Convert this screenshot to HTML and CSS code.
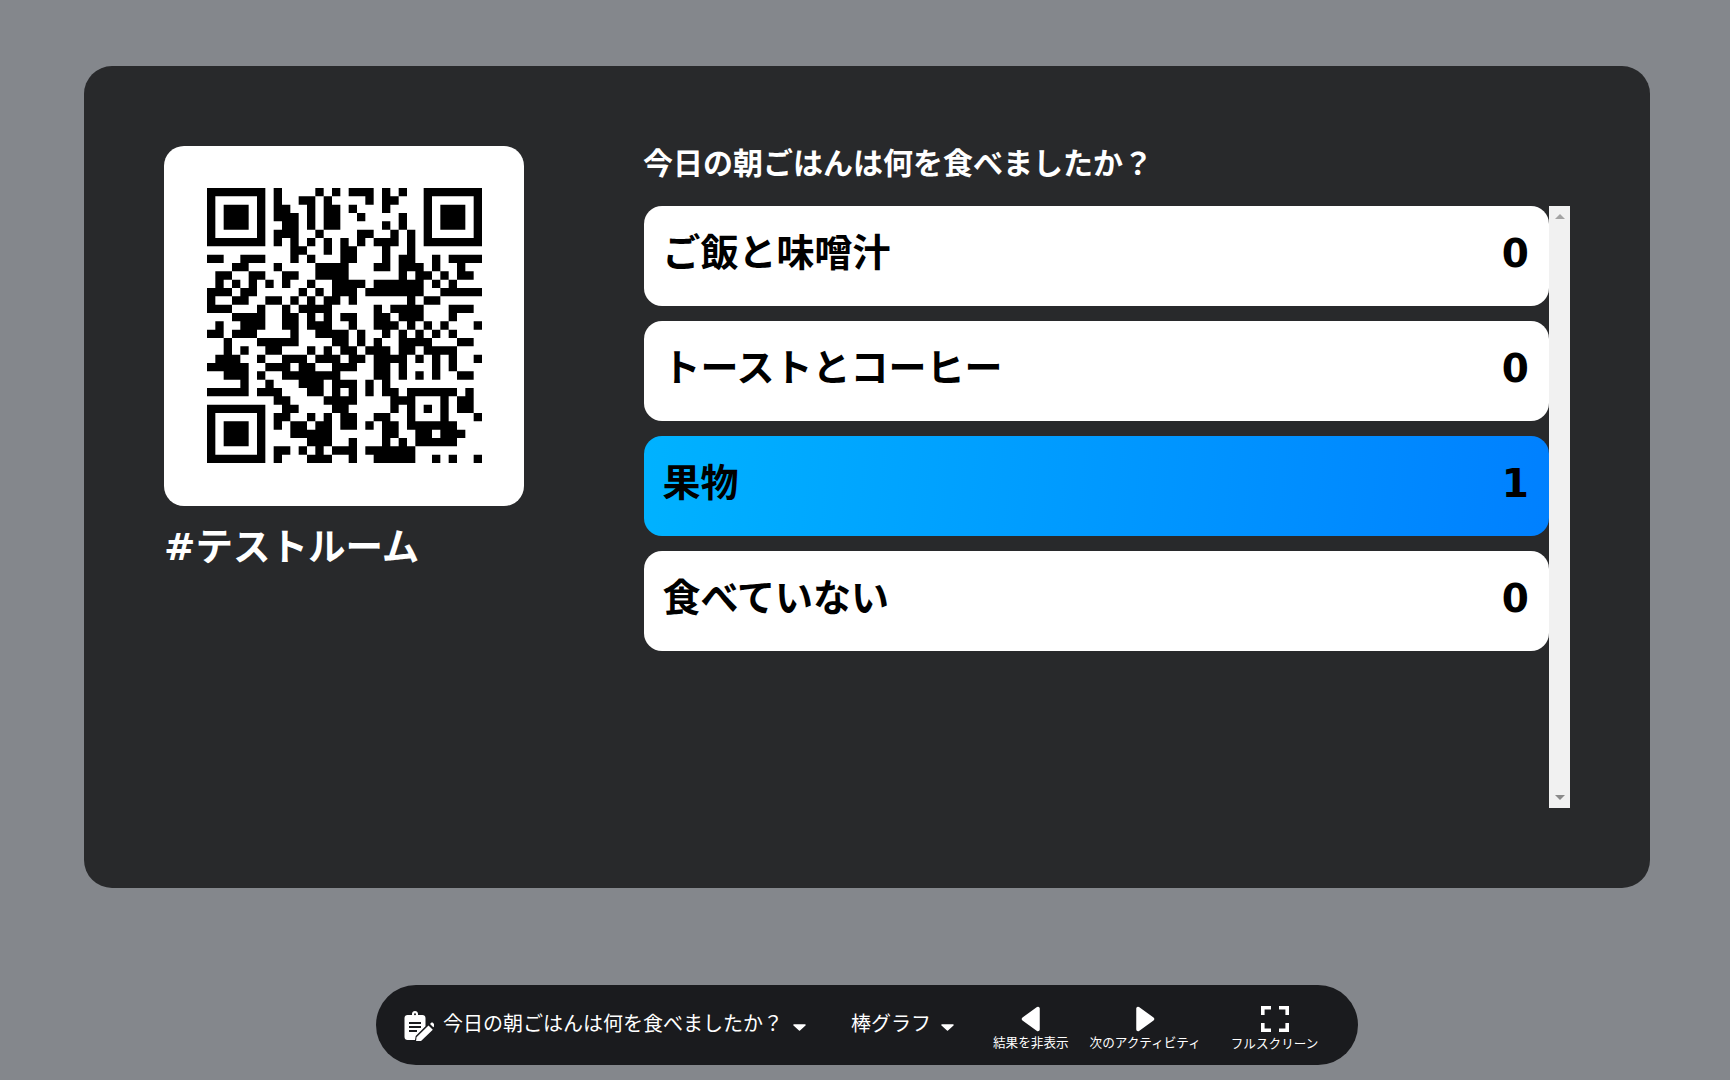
FILE: index.html
```html
<!DOCTYPE html>
<html lang="ja">
<head>
<meta charset="utf-8">
<title>テストルーム</title>
<link rel="stylesheet" href="styles.css">
</head>
<body>
<div class="page">
  <main class="panel">
    <section class="room">
      <div class="qr-card">
        <svg class="qr" viewBox="0 0 33 33" aria-label="QRコード">
          <path fill="none" stroke="#000" stroke-width="1" d="
M0 .5h7M8 .5h1M13 .5h1M15 .5h1M17 .5h3M21 .5h1M23 .5h1M26 .5h7
M0 1.5h1M6 1.5h1M8 1.5h1M11 1.5h2M14 1.5h1M19 1.5h1M21 1.5h2M26 1.5h1M32 1.5h1
M0 2.5h1M2 2.5h3M6 2.5h1M8 2.5h2M12 2.5h1M14 2.5h2M17 2.5h1M21 2.5h1M26 2.5h1M28 2.5h3M32 2.5h1
M0 3.5h1M2 3.5h3M6 3.5h1M8 3.5h3M12 3.5h1M14 3.5h2M18 3.5h1M23 3.5h1M26 3.5h1M28 3.5h3M32 3.5h1
M0 4.5h1M2 4.5h3M6 4.5h1M9 4.5h2M12 4.5h1M14 4.5h2M21 4.5h1M23 4.5h1M26 4.5h1M28 4.5h3M32 4.5h1
M0 5.5h1M6 5.5h1M8 5.5h3M13 5.5h1M18 5.5h2M22 5.5h1M24 5.5h1M26 5.5h1M32 5.5h1
M0 6.5h7M8 6.5h1M10 6.5h1M12 6.5h1M14 6.5h1M16 6.5h1M18 6.5h1M20 6.5h2M22 6.5h1M24 6.5h1M26 6.5h7
M10 7.5h2M14 7.5h1M16 7.5h2M21 7.5h1M24 7.5h1
M0 8.5h2M4 8.5h3M10 8.5h1M12 8.5h1M16 8.5h2M21 8.5h1M23 8.5h2M27 8.5h1M29 8.5h4
M3 9.5h2M8 9.5h1M13 9.5h4M20 9.5h2M23 9.5h3M27 9.5h1M30 9.5h1
M1 10.5h2M5 10.5h2M9 10.5h2M13 10.5h4M23 10.5h1M25 10.5h2M28 10.5h1M30 10.5h2
M1 11.5h1M3 11.5h1M5 11.5h1M7 11.5h1M9 11.5h1M12 11.5h1M15 11.5h4M20 11.5h6M27 11.5h1M29 11.5h1
M0 12.5h3M4 12.5h2M11 12.5h1M13 12.5h1M15 12.5h3M19 12.5h7M28 12.5h3M31 12.5h2
M0 13.5h1M3 13.5h2M7 13.5h2M10 13.5h1M12 13.5h1M14 13.5h2M17 13.5h1M24 13.5h1M26 13.5h2
M0 14.5h3M6 14.5h1M9 14.5h1M11 14.5h4M20 14.5h1M22 14.5h4M29 14.5h3
M3 15.5h4M9 15.5h2M12 15.5h1M14 15.5h1M16 15.5h2M20 15.5h2M23 15.5h3M29 15.5h1
M1 16.5h1M4 16.5h3M9 16.5h2M12 16.5h3M17 16.5h1M20 16.5h3M24 16.5h1M26 16.5h1M28 16.5h1M32 16.5h1
M0 17.5h2M3 17.5h3M10 17.5h1M13 17.5h4M18 17.5h1M21 17.5h1M23 17.5h1M25 17.5h1M27 17.5h1M29 17.5h1
M2 18.5h1M6 18.5h5M15 18.5h2M18 18.5h1M20 18.5h1M23 18.5h4M30 18.5h2
M2 19.5h1M4 19.5h1M7 19.5h2M12 19.5h1M14 19.5h1M16 19.5h2M19 19.5h3M23 19.5h2M26 19.5h4
M1 20.5h3M6 20.5h1M9 20.5h3M13 20.5h3M17 20.5h2M20 20.5h4M25 20.5h1M27 20.5h1M29 20.5h1M32 20.5h1
M0 21.5h5M7 21.5h3M11 21.5h2M15 21.5h3M20 21.5h2M23 21.5h1M27 21.5h1M29 21.5h1
M2 22.5h3M6 22.5h1M9 22.5h7M20 22.5h2M23 22.5h1M25 22.5h1M27 22.5h1M30 22.5h2
M4 23.5h1M7 23.5h1M11 23.5h3M15 23.5h3M19 23.5h1M21 23.5h1
M0 24.5h5M6 24.5h3M12 24.5h2M15 24.5h1M17 24.5h1M19 24.5h1M21 24.5h2M24 24.5h6M31 24.5h1
M8 25.5h2M14 25.5h4M22 25.5h3M28 25.5h1M30 25.5h2
M0 26.5h7M9 26.5h2M15 26.5h2M22 26.5h1M24 26.5h1M26 26.5h1M28 26.5h1M30 26.5h2
M0 27.5h1M6 27.5h1M8 27.5h2M12 27.5h1M14 27.5h1M16 27.5h2M20 27.5h2M24 27.5h1M28 27.5h1M32 27.5h1
M0 28.5h1M2 28.5h3M6 28.5h1M8 28.5h1M10 28.5h2M13 28.5h2M16 28.5h2M19 28.5h1M21 28.5h2M24 28.5h6
M0 29.5h1M2 29.5h3M6 29.5h1M10 29.5h5M21 29.5h2M25 29.5h2M28 29.5h3
M0 30.5h1M2 30.5h3M6 30.5h1M12 30.5h3M17 30.5h1M21 30.5h1M23 30.5h1M25 30.5h5
M0 31.5h1M6 31.5h1M8 31.5h2M11 31.5h1M13 31.5h1M15 31.5h3M19 31.5h6
M0 32.5h7M8 32.5h1M12 32.5h3M17 32.5h1M20 32.5h5M27 32.5h1M29 32.5h1M32 32.5h1"/>
        </svg>
      </div>
      <h2 class="room-name">#テストルーム</h2>
    </section>
    <section class="poll">
      <h1 class="question">今日の朝ごはんは何を食べましたか？</h1>
      <div class="results">
        <ul class="options">
          <li class="option"><span class="label">ご飯と味噌汁</span><span class="count">0</span></li>
          <li class="option"><span class="label">トーストとコーヒー</span><span class="count">0</span></li>
          <li class="option is-top"><span class="label">果物</span><span class="count">1</span></li>
          <li class="option"><span class="label">食べていない</span><span class="count">0</span></li>
        </ul>
        <div class="scrollbar"><span class="arrow up"></span><span class="arrow down"></span></div>
      </div>
    </section>
  </main>
  <nav class="toolbar">
    <div class="menu question-menu">
      <svg class="clip-icon" viewBox="0 0 29 30">
        <path fill="#fff" d="M3 4h4.500V2.800C7.500 1.200 8.800 0 10.500 0s3 1.200 3 2.800V4H18c1.600 0 3 1.300 3 3v8.200l-9.800 9.700-.7 4.100H3c-1.700 0-3-1.300-3-3V7c0-1.700 1.300-3 3-3z"/>
        <path fill="#1a1b1e" d="M9.500 3.300a1 1 0 1 0 2 0a1 1 0 1 0-2 0zM4.500 11h12v2h-12zM4.500 15h12v2h-12zM4.500 19h8v2h-8z"/>
        <path fill="#fff" d="M24 14.500l4.300 4.300L16 30.500l-4.500.5.500-4.700zM25.500 13l1-1c.6-.6 1.500-.6 2.100 0l1.200 1.200c.6.600.6 1.500 0 2.100l-1 1z"/>
      </svg>
      <span class="menu-text">今日の朝ごはんは何を食べましたか？</span>
      <svg class="caret" viewBox="0 0 13 7"><path fill="#fff" stroke="#fff" stroke-width="1.500" stroke-linejoin="round" d="M1 1h11L6.500 6z"/></svg>
    </div>
    <div class="menu chart-menu">
      <span class="menu-text">棒グラフ</span>
      <svg class="caret" viewBox="0 0 13 7"><path fill="#fff" stroke="#fff" stroke-width="1.500" stroke-linejoin="round" d="M1 1h11L6.500 6z"/></svg>
    </div>
    <button class="tool hide-tool">
      <svg class="tool-icon" viewBox="0 0 28 26"><path fill="#fff" stroke="#fff" stroke-width="3.500" stroke-linejoin="round" d="M21 2.500v21L6.500 13z"/></svg>
      <span class="tool-label">結果を非表示</span>
    </button>
    <button class="tool next-tool">
      <svg class="tool-icon" viewBox="0 0 28 26"><path fill="#fff" stroke="#fff" stroke-width="3.500" stroke-linejoin="round" d="M7 2.500v21L21.500 13z"/></svg>
      <span class="tool-label">次のアクティビティ</span>
    </button>
    <button class="tool full-tool">
      <svg class="tool-icon" viewBox="0 0 28 26"><path fill="none" stroke="#fff" stroke-width="3.600" d="M1.800 9V1.800H10M18 1.800h8.200V9M26.200 17v7.200H18M10 24.200H1.800V17"/></svg>
      <span class="tool-label">フルスクリーン</span>
    </button>
  </nav>
</div>
</body>
</html>
```
FILE: styles.css
```css
* { box-sizing: border-box; }
html, body { margin: 0; height: 100%; }
body {
  background: #84878c;
  color: #fff;
  font-family: "Noto Sans CJK JP", sans-serif;
  overflow: hidden;
}
.page {
  display: flex;
  flex-direction: column;
  align-items: center;
  padding: 65.5px 80px 0 84px;
  height: 1080px;
}
.panel {
  display: flex;
  gap: 120px;
  width: 100%;
  height: 822px;
  padding: 80px;
  background: #28292b;
  border-radius: 28px;
}
.room { width: 360px; flex: none; }
.qr-card {
  display: flex;
  align-items: center;
  justify-content: center;
  width: 360px;
  height: 360px;
  background: #fff;
  border-radius: 20px;
}
.qr { width: 275px; height: 275px; display: block; }
.room-name {
  margin: 13px 0 0;
  font-family: "DejaVu Sans", "Noto Sans CJK JP", sans-serif;
  font-size: 37.500px;
  line-height: 56px;
  font-weight: 700;
}
.poll { flex: 1; min-width: 0; }
.question {
  margin: 0 0 0 -1px;
  height: 60px;
  padding-bottom: 3px;
  font-size: 30px;
  line-height: 30px;
  font-weight: 700;
}
.results { display: flex; height: 602px; }
.options {
  flex: 1;
  display: flex;
  flex-direction: column;
  gap: 15px;
  list-style: none;
  margin: 0;
  padding: 0;
}
.option {
  display: flex;
  align-items: center;
  justify-content: space-between;
  height: 100px;
  padding: 0 20px 0 18.500px;
  background: #fff;
  color: #000;
  border-radius: 18px;
  font-size: 38px;
  font-weight: 700;
}
.option.is-top { background: linear-gradient(96deg, #00b2ff, #0080ff); }
.label { padding-bottom: 12px; }
.count { font-family: "DejaVu Sans", sans-serif; font-size: 39px; padding-bottom: 4px; }
.scrollbar {
  flex: none;
  width: 21px;
  display: flex;
  flex-direction: column;
  justify-content: space-between;
  align-items: center;
  padding: 8px 0;
  background: #f1f1f1;
}
.arrow { width: 0; height: 0; border-left: 5px solid transparent; border-right: 5px solid transparent; }
.arrow.up { border-bottom: 5px solid #a3a3a3; }
.arrow.down { border-top: 5px solid #8a8a8a; }
.toolbar {
  display: flex;
  align-items: center;
  margin-top: 97.500px;
  width: 982px;
  height: 80px;
  padding: 0 39px 0 28px;
  background: #1a1b1e;
  border-radius: 40px;
}
.menu { display: flex; align-items: center; flex: none; margin-top: -4px; }
.menu-text { font-size: 20px; line-height: 28px; }
.caret { width: 13px; height: 7px; margin-left: 10px; margin-top: 9px; flex: none; }
.clip-icon { width: 30px; height: 30px; margin-right: 9px; margin-top: 6px; flex: none; }
.chart-menu { margin-left: 45px; }
.tool {
  display: flex;
  flex-direction: column;
  align-items: center;
  flex: none;
  padding: 6px 0 0;
  margin: 0;
  background: none;
  border: 0;
  color: #fff;
  font: inherit;
}
.tool-icon { width: 28px; height: 26px; margin-top: 1px; display: block; }
.tool-label { font-size: 12.600px; line-height: 18px; margin-top: 1px; white-space: nowrap; }
.hide-tool { margin-left: 39px; }
.next-tool { margin-left: 21px; }
.full-tool { margin-left: 30px; }
.full-tool .tool-label { margin-top: 2px; }
```
